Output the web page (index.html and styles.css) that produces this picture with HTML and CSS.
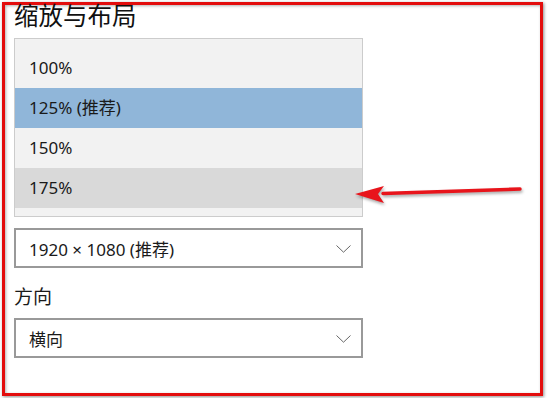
FILE: index.html
```html
<!DOCTYPE html>
<html>
<head>
	<meta charset="UTF-8">
	<title>缩放与布局</title>
	<link rel="stylesheet" href="styles.css">
</head>
<body>
	<div class="frame">
		<h1 class="title">缩放与布局</h1>
		<ul class="scale-list">
			<li>100%</li>
			<li class="selected">125% (推荐)</li>
			<li>150%</li>
			<li class="hover">175%</li>
		</ul>
		<div class="select">
			<span>1920 × 1080 (推荐)</span>
			<svg class="chevron" width="15" height="8" viewBox="0 0 15 8"><path d="M0.5 0.5 L7.5 7.2 L14.5 0.5" fill="none" stroke="#666" stroke-width="1"/></svg>
		</div>
		<p class="label">方向</p>
		<div class="select">
			<span>横向</span>
			<svg class="chevron" width="15" height="8" viewBox="0 0 15 8"><path d="M0.5 0.5 L7.5 7.2 L14.5 0.5" fill="none" stroke="#666" stroke-width="1"/></svg>
		</div>
		<!-- 标注箭头 -->
		<svg class="arrow" width="190" height="30" viewBox="0 0 190 30">
			<line x1="35" y1="10.5" x2="172" y2="6" stroke="#e8141b" stroke-width="3.5" stroke-linecap="round"/>
			<polygon points="7,11 36,3 30,11 36,20" fill="#e8141b"/>
		</svg>
	</div>
</body>
</html>
```

FILE: styles.css
```css
*{margin: 0;padding: 0;box-sizing: border-box;}
body{background: #FFFFFF;font-family: "Noto Sans", "Noto Sans CJK SC", sans-serif;color: #1a1a1a;}
li{list-style-type: none;}
.frame{position: relative;margin: 2px;width: 541px;height: 394px;border: 3px solid #e30d0d;padding-left: 9px;box-shadow: 1px 1px 3px rgba(0,0,0,.45), inset 1px 1px 3px rgba(0,0,0,.3);}
.title{font-size: 24.5px;font-weight: normal;line-height: 22px;height: 33px;color: #111;}
.scale-list{width: 349px;border: 1px solid #cccccc;background: #f2f2f2;padding: 9px 0 8px;}
.scale-list li{height: 40px;line-height: 40px;padding-left: 14px;font-size: 17px;color: #1a1a1a;}
.scale-list li.selected{background: #90b6d9;}
.scale-list li.hover{background: #d9d9d9;}
.select{display: flex;align-items: center;justify-content: space-between;width: 349px;height: 40px;margin-top: 11px;border: 2px solid #999999;padding: 0 10px 0 13px;font-size: 17px;}
.chevron{display: block;margin-top: 2px;}
.label{font-size: 19px;line-height: 30px;margin-top: 14px;}
.label + .select{margin-top: 6px;}
.arrow{position: absolute;left: 343px;top: 178px;filter: drop-shadow(1px 2px 1.5px rgba(0,0,0,.35));}
```
